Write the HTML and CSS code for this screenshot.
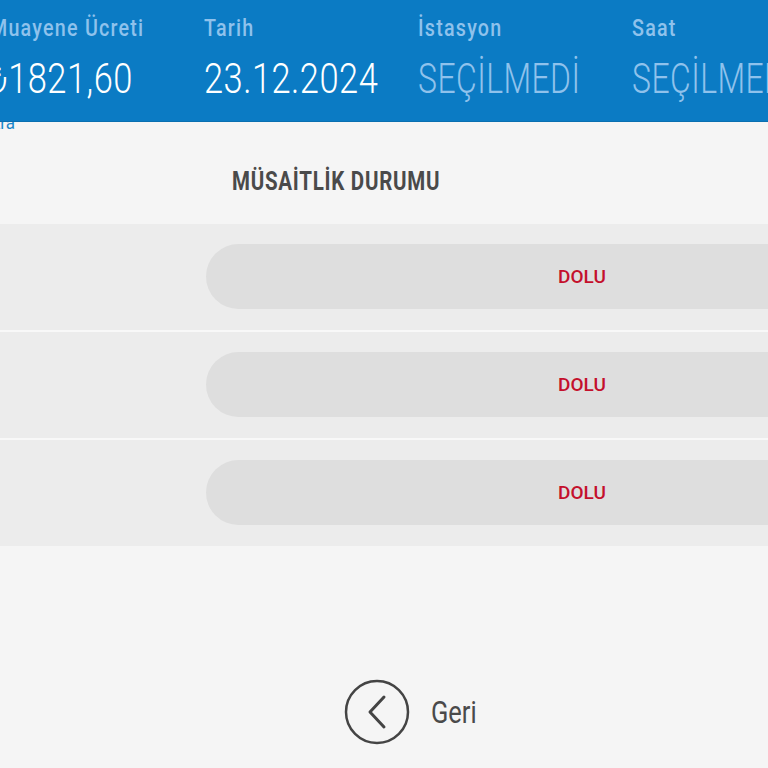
FILE: index.html
```html
<!DOCTYPE html>
<html lang="tr">
<head>
<meta charset="utf-8">
<title>Müsaitlik Durumu</title>
<link rel="stylesheet" href="styles.css">
</head>
<body>
<header class="summary">
  <div class="summary-item">
    <div class="label"><span class="cond">Muayene Ücreti</span></div>
    <div class="value"><span class="cond">₺1821,60</span></div>
  </div>
  <div class="summary-item">
    <div class="label"><span class="cond">Tarih</span></div>
    <div class="value"><span class="cond">23.12.2024</span></div>
  </div>
  <div class="summary-item">
    <div class="label"><span class="cond">İstasyon</span></div>
    <div class="value muted"><span class="cond">SEÇİLMEDİ</span></div>
  </div>
  <div class="summary-item">
    <div class="label"><span class="cond">Saat</span></div>
    <div class="value muted"><span class="cond">SEÇİLMEDİ</span></div>
  </div>
</header>
<div class="edit-row"><a class="edit-link">Randevu Saatleri Ara</a></div>
<main>
  <div class="table-head">
    <div class="col-time"></div>
    <div class="col-status"><h2 class="cond">MÜSAİTLİK DURUMU</h2></div>
  </div>
  <div class="slot-row">
    <div class="col-time"></div>
    <div class="col-status"><div class="pill">DOLU</div></div>
  </div>
  <div class="slot-row">
    <div class="col-time"></div>
    <div class="col-status"><div class="pill">DOLU</div></div>
  </div>
  <div class="slot-row">
    <div class="col-time"></div>
    <div class="col-status"><div class="pill">DOLU</div></div>
  </div>
  <div class="back-wrap">
    <a class="back">
      <svg class="back-icon" width="66" height="66" viewBox="0 0 66 66">
        <circle cx="33" cy="33" r="31" fill="none" stroke="#444" stroke-width="2.5"/>
        <path d="M40 18 L26 33 L40 48" fill="none" stroke="#444" stroke-width="3" stroke-linecap="round" stroke-linejoin="round"/>
      </svg>
      <span class="back-text"><span class="cond">Geri</span></span>
    </a>
  </div>
</main>
</body>
</html>
```

FILE: styles.css
```css
* { box-sizing: border-box; }
html, body {
  margin: 0;
  padding: 0;
  background: #f5f5f5;
  font-family: Roboto, "Liberation Sans", sans-serif;
  overflow: hidden;
}
.cond {
  display: inline-block;
  transform: scaleX(0.82);
  transform-origin: left center;
  white-space: nowrap;
}
.summary {
  position: relative;
  z-index: 2;
  background: #0b7bc4;
  height: 122px;
  display: grid;
  grid-template-columns: repeat(4, 214px);
  margin-left: -10px;
  padding-top: 14px;
  border-bottom: 1px solid #0a6fb0;
}
.label {
  font-size: 24px;
  font-weight: 500;
  line-height: 28px;
  letter-spacing: 1.5px;
  color: #8fc2ec;
  white-space: nowrap;
}
.value {
  margin-top: 14px;
  font-size: 42px;
  font-weight: 300;
  line-height: 46px;
  letter-spacing: 0.6px;
  color: #ffffff;
  white-space: nowrap;
}
.value.muted { color: #8fc2ec; }
.value.muted .cond { transform: scaleX(0.76); }
.edit-row {
  display: flex;
  justify-content: flex-end;
  width: 15px;
  height: 0;
  position: relative;
  z-index: 1;
}
.edit-link {
  display: block;
  flex: none;
  margin-top: -8px;
  font-size: 17px;
  line-height: 18px;
  color: #1a86c8;
  white-space: nowrap;
}
.table-head, .slot-row {
  display: grid;
  grid-template-columns: 206px 752px;
}
.table-head {
  height: 102px;
  align-items: center;
  padding-top: 16px;
}
.table-head h2 {
  margin: 0 0 0 26px;
  font-size: 25px;
  font-weight: 700;
  color: #4a4a4a;
  letter-spacing: 0.9px;
}
.slot-row {
  height: 106px;
  background: #ececec;
  align-items: center;
}
.slot-row + .slot-row { border-top: 2px solid #f8f8f8; height: 108px; }
.pill {
  height: 65px;
  border-radius: 33px;
  background: #dedede;
  display: flex;
  align-items: center;
  justify-content: center;
  font-size: 19px;
  font-weight: 500;
  color: #c4102c;
  margin-top: -1px;
}
.back-wrap {
  display: flex;
  justify-content: center;
  padding-top: 133px;
  padding-left: 48px;
}
.back {
  display: flex;
  align-items: center;
  gap: 21px;
  color: #4a4a4a;
}
.back-icon { display: block; }
.back-text {
  font-size: 31px;
  font-weight: 400;
  width: 42px;
}
```
